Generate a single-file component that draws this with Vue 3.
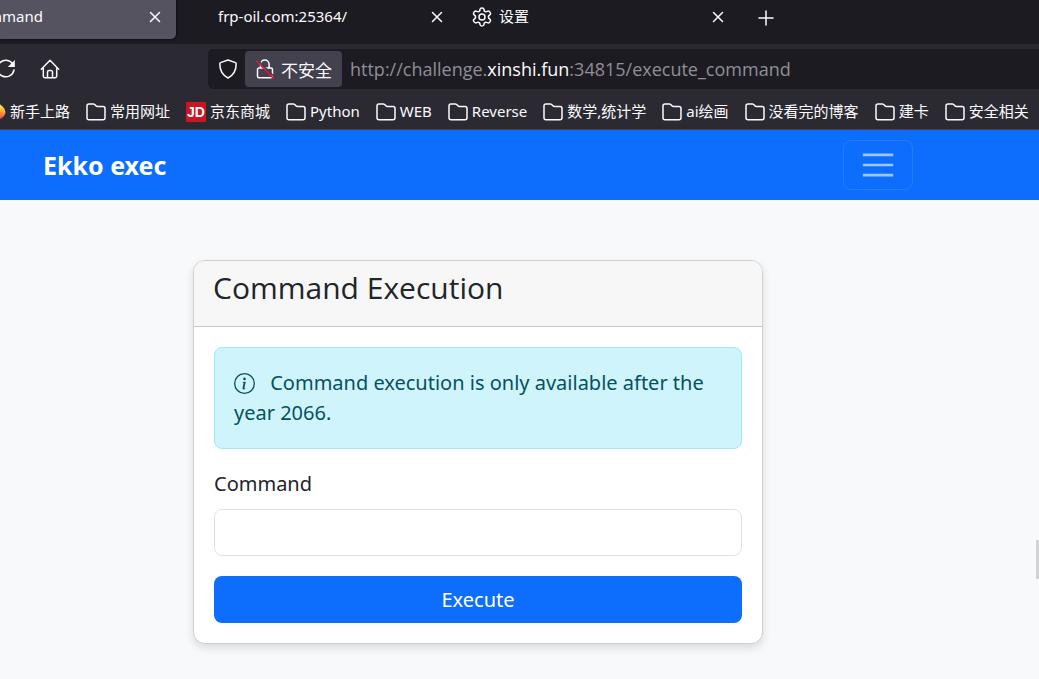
<script setup>
import { ref } from 'vue'

const command = ref('')
const bookmarks = [
  { label: '新手上路', icon: 'firefox' },
  { label: '常用网址', icon: 'folder' },
  { label: '京东商城', icon: 'jd' },
  { label: 'Python', icon: 'folder' },
  { label: 'WEB', icon: 'folder' },
  { label: 'Reverse', icon: 'folder' },
  { label: '数学,统计学', icon: 'folder' },
  { label: 'ai绘画', icon: 'folder' },
  { label: '没看完的博客', icon: 'folder' },
  { label: '建卡', icon: 'folder' },
  { label: '安全相关', icon: 'folder' },
]
</script>

<template>
  <div class="window">
    <header class="chrome">
      <div class="tabs">
        <div class="tab active">
          <span class="tab-title">mmand</span>
          <button class="close" aria-label="Close tab">
            <svg width="12" height="12" viewBox="0 0 12 12"><path d="M1.5 1.5l9 9M10.5 1.5l-9 9" /></svg>
          </button>
        </div>
        <div class="tab second">
          <span class="tab-title">frp-oil.com:25364/</span>
          <button class="close" aria-label="Close tab">
            <svg width="12" height="12" viewBox="0 0 12 12"><path d="M1.5 1.5l9 9M10.5 1.5l-9 9" /></svg>
          </button>
        </div>
        <div class="tab third">
          <svg class="gear" width="20" height="20" viewBox="0 0 20 20">
            <path d="M8 2.500Q8.200 1 10 1T12 2.500L12.300 4Q13.300 5 14.500 4.600L16 4.100Q17.300 3.900 18.200 5.500T17.800 7.900L16.700 8.900Q16.200 10 16.700 11.100L17.800 12.100Q18.900 13 18.200 14.500T16 15.900L14.500 15.400Q13.300 15 12.300 16L12 17.500Q11.800 19 10 19T8 17.500L7.700 16Q6.700 15 5.500 15.400L4 15.900Q2.700 16.100 1.800 14.500T2.200 12.100L3.300 11.100Q3.800 10 3.300 8.900L2.200 7.900Q1.100 7 1.800 5.500T4 4.100L5.500 4.600Q6.700 5 7.700 4z" />
            <circle cx="10" cy="10" r="3" />
          </svg>
          <span class="tab-title">设置</span>
          <button class="close" aria-label="Close tab">
            <svg width="12" height="12" viewBox="0 0 12 12"><path d="M1.5 1.5l9 9M10.5 1.5l-9 9" /></svg>
          </button>
        </div>
        <button class="new-tab" aria-label="New tab">
          <svg width="16" height="16" viewBox="0 0 16 16"><path d="M8 1v14M1 8h14" /></svg>
        </button>
      </div>

      <div class="toolbar">
        <button class="tool reload" aria-label="Reload">
          <svg width="20" height="20" viewBox="0 0 20 20">
            <path d="M16.800 5A8.300 8.300 0 1 0 18 11" />
            <path class="solid" d="M18.800 1v7h-7z" />
          </svg>
        </button>
        <button class="tool" aria-label="Home">
          <svg width="20" height="20" viewBox="0 0 20 20">
            <path d="M1.300 10.300L10 1.300l8.700 9M3.300 9v8a1.700 1.700 0 0 0 1.700 1.700h10a1.700 1.700 0 0 0 1.700-1.700V9M7.500 18.500V13a1.500 1.500 0 0 1 1.500-1.500h2a1.500 1.500 0 0 1 1.500 1.500v5.500" />
          </svg>
        </button>
        <div class="address">
          <button class="shield" aria-label="Tracking protection">
            <svg width="20" height="20" viewBox="0 0 20 20">
              <path d="M10 1l7.500 2.600a1 1 0 0 1 .7 1c0 6.500-2 11.400-8.200 14.400C3.800 16 1.800 11.100 1.800 4.600a1 1 0 0 1 .7-1z" />
            </svg>
          </button>
          <button class="identity">
            <svg width="20" height="20" viewBox="0 0 20 20">
              <path d="M5.500 9V5.200a4.300 4.300 0 0 1 8.600 0V9M4 9h12a1.500 1.500 0 0 1 1.500 1.500v6.700a1.500 1.500 0 0 1-1.500 1.500H4a1.500 1.500 0 0 1-1.500-1.500v-6.700A1.500 1.500 0 0 1 4 9z" />
              <path class="bg" d="M2.800 1.200l17 17" />
              <path class="slash" d="M1.500 2l17 17.500" />
            </svg>
            <span>不安全</span>
          </button>
          <div class="url">http://challenge.<b>xinshi.fun</b>:34815/execute_command</div>
        </div>
      </div>

      <nav class="bookmarks" aria-label="Bookmarks">
        <a v-for="item in bookmarks" :key="item.label" href="#" class="bookmark">
          <svg v-if="item.icon === 'folder'" width="20" height="20" viewBox="0 0 20 20">
            <path d="M1 15.800V4a2 2 0 0 1 2-2h4.300a2 2 0 0 1 1.300.5l1.500 1.400a2 2 0 0 0 1.300.5H17a2 2 0 0 1 2 2v9.400a2 2 0 0 1-2 2H3a2 2 0 0 1-2-2z" />
          </svg>
          <span v-else-if="item.icon === 'jd'" class="jd">JD</span>
          <svg v-else width="20" height="20" viewBox="0 0 20 20">
            <defs>
              <linearGradient id="flame" x1="0" y1="0" x2="0" y2="1">
                <stop offset="0.1" stop-color="#fff04a" />
                <stop offset="0.5" stop-color="#ffae2c" />
                <stop offset="1" stop-color="#f5335d" />
              </linearGradient>
            </defs>
            <path class="flame" d="M10 4l3-3c1 2 6.500 4 6.500 10A9.500 8.500 0 0 1 1 11c0-4 4-7 9-7z" />
          </svg>
          <span>{{ item.label }}</span>
        </a>
      </nav>
    </header>

    <div class="page">
      <nav class="navbar">
        <div class="container">
          <a href="#" class="brand">Ekko exec</a>
          <button class="toggler" aria-label="Toggle navigation">
            <svg width="38" height="38" viewBox="0 0 30 30"><path d="M3 7h24M3 15h24M3 23h24" /></svg>
          </button>
        </div>
      </nav>

      <main class="content">
        <section class="card">
          <div class="card-header"><h1>Command Execution</h1></div>
          <div class="card-body">
            <div class="alert" role="alert">
              <svg width="21" height="21" viewBox="0 0 16 16">
                <path d="M8 15A7 7 0 1 1 8 1a7 7 0 0 1 0 14m0 1A8 8 0 1 0 8 0a8 8 0 0 0 0 16" />
                <path d="m8.930 6.588-2.290.287-.082.380.450.083c.294.070.352.176.288.469l-.738 3.468c-.194.897.105 1.319.808 1.319.545 0 1.178-.252 1.465-.598l.088-.416c-.200.176-.492.246-.686.246-.275 0-.375-.193-.304-.533zM9 4.500a1 1 0 1 1-2 0 1 1 0 0 1 2 0" />
              </svg>
              Command execution is only available after the year 2066.
            </div>
            <form @submit.prevent>
              <label for="command">Command</label>
              <input id="command" v-model="command" type="text" />
              <button type="submit">Execute</button>
            </form>
          </div>
        </section>
      </main>
      <div class="scroll-thumb"></div>
    </div>
  </div>
</template>

<style>
body {
  margin: 0;
  background: #f8f9fa;
}
</style>

<style scoped>
* {
  box-sizing: border-box;
}
.window {
  min-height: 100vh;
  display: flex;
  flex-direction: column;
  overflow: hidden;
  font-family: "Noto Sans", "Noto Sans CJK SC", sans-serif;
}
button {
  font: inherit;
  color: inherit;
  border: 0;
  padding: 0;
  background: none;
}
a {
  color: inherit;
  text-decoration: none;
}
svg {
  flex: none;
}
.chrome {
  background: #2b2a33;
  color: #fbfbfe;
  border-bottom: 1px solid #42414d;
}
.chrome svg {
  display: block;
  fill: none;
  stroke: #fbfbfe;
  stroke-width: 1.5;
  stroke-linejoin: round;
  stroke-linecap: round;
}
.tabs {
  height: 44px;
  display: flex;
  background: #1c1b22;
  font-size: 15px;
  line-height: 20px;
}
.tab {
  display: flex;
  height: 39px;
  align-items: flex-start;
  padding-top: 6px;
}
.tab .close {
  margin: 5px 0 0 auto;
}
.active {
  width: 176px;
  padding-right: 15px;
  background: #55535f;
  border-radius: 0 0 5px 0;
  box-shadow: 0 0 3px #000;
}
.active .tab-title {
  width: 43px;
  display: flex;
  justify-content: flex-end;
}
.second {
  width: 267px;
  padding-left: 42px;
}
.third {
  width: 281px;
  padding-left: 29px;
  gap: 7px;
}
.gear {
  margin-top: 1px;
}
.new-tab {
  height: 16px;
  margin: 10px 0 0 34px;
}
.toolbar {
  height: 50px;
  display: flex;
  align-items: center;
}
.reload {
  margin-left: -4px;
}
.tool + .tool {
  margin-left: 24px;
}
.chrome .solid {
  fill: #fbfbfe;
  stroke: none;
}
.address {
  flex: 1;
  height: 40px;
  margin-left: 148px;
  padding-left: 10px;
  display: flex;
  align-items: center;
  background: #1c1b22;
  border-radius: 5px 0 0 5px;
  font-family: "Open Sans", "Noto Sans CJK SC", sans-serif;
  font-size: 18px;
}
.identity {
  height: 36px;
  margin: 0 8px 0 7px;
  padding: 0 10px;
  display: flex;
  align-items: center;
  gap: 6px;
  background: #42414d;
  border-radius: 4px;
  font-size: 17px;
}
.chrome .bg {
  stroke: #42414d;
}
.chrome .slash {
  stroke: #e9103e;
}
.url {
  color: #8f8f95;
  white-space: nowrap;
}
.url b {
  font-weight: 400;
  color: #fbfbfe;
}
.bookmarks {
  height: 35px;
  display: flex;
  align-items: center;
  gap: 16px;
  margin-left: -14px;
  font-size: 15px;
  line-height: 20px;
  white-space: nowrap;
}
.bookmark {
  display: flex;
  align-items: center;
  gap: 4px;
}
.bookmark span:last-child {
  padding-bottom: 2px;
}
.chrome .flame {
  fill: url(#flame);
  stroke: none;
}
.jd {
  width: 20px;
  height: 20px;
  background: #c91623;
  font: 700 14px/20px "Liberation Sans", sans-serif;
  text-align: center;
}
.page {
  flex: 1;
  position: relative;
  background: #f8f9fa;
  color: #212529;
  font-size: 20px;
  line-height: 30px;
}
.navbar {
  background: #0d6efd;
  padding: 10px 0;
}
.container {
  max-width: 956px;
  padding: 0 43px;
  display: flex;
  align-items: center;
  justify-content: space-between;
}
.brand {
  color: #fff;
  font-size: 25px;
  font-weight: 700;
}
.toggler {
  height: 50px;
  padding: 0 15px;
  border: 1px solid #257cfd;
  border-radius: 8px;
}
.toggler svg {
  display: block;
  fill: none;
  stroke: #9ec5fe;
  stroke-width: 2;
}
.content {
  max-width: 956px;
  padding: 60px 43px 36px;
}
.card {
  max-width: 570px;
  margin: 0 auto;
  background: #fff;
  border: 1px solid #ced0d1;
  border-radius: 12px;
  box-shadow: 0 4px 8px rgba(0, 0, 0, 0.12);
  overflow: hidden;
}
.card-header {
  padding: 9px 19px 21px;
  background: #f7f7f7;
  border-bottom: 1px solid #c8c9ca;
}
h1 {
  margin: 0;
  font-family: "Open Sans", sans-serif;
  font-size: 30px;
  line-height: 35px;
  font-weight: 400;
}
.card-body {
  padding: 20px;
}
.alert {
  padding: 20px 19px;
  background: #cff4fc;
  border: 1px solid #9eeaf9;
  border-radius: 8px;
  color: #055160;
}
.alert svg {
  fill: currentColor;
  vertical-align: -4px;
  margin-right: 10px;
}
form {
  display: flex;
  flex-direction: column;
  margin-top: 20px;
}
label {
  margin-bottom: 10px;
}
input {
  width: 100%;
  height: 47px;
  padding: 8px 15px;
  font: inherit;
  color: inherit;
  background: #fff;
  border: 1px solid #dee2e6;
  border-radius: 8px;
}
form button {
  height: 47px;
  margin-top: 20px;
  background: #0d6efd;
  color: #fff;
  border-radius: 8px;
}
.scroll-thumb {
  position: absolute;
  right: 0;
  top: 410px;
  width: 3px;
  height: 39px;
  background: #d2d3d4;
}
</style>
